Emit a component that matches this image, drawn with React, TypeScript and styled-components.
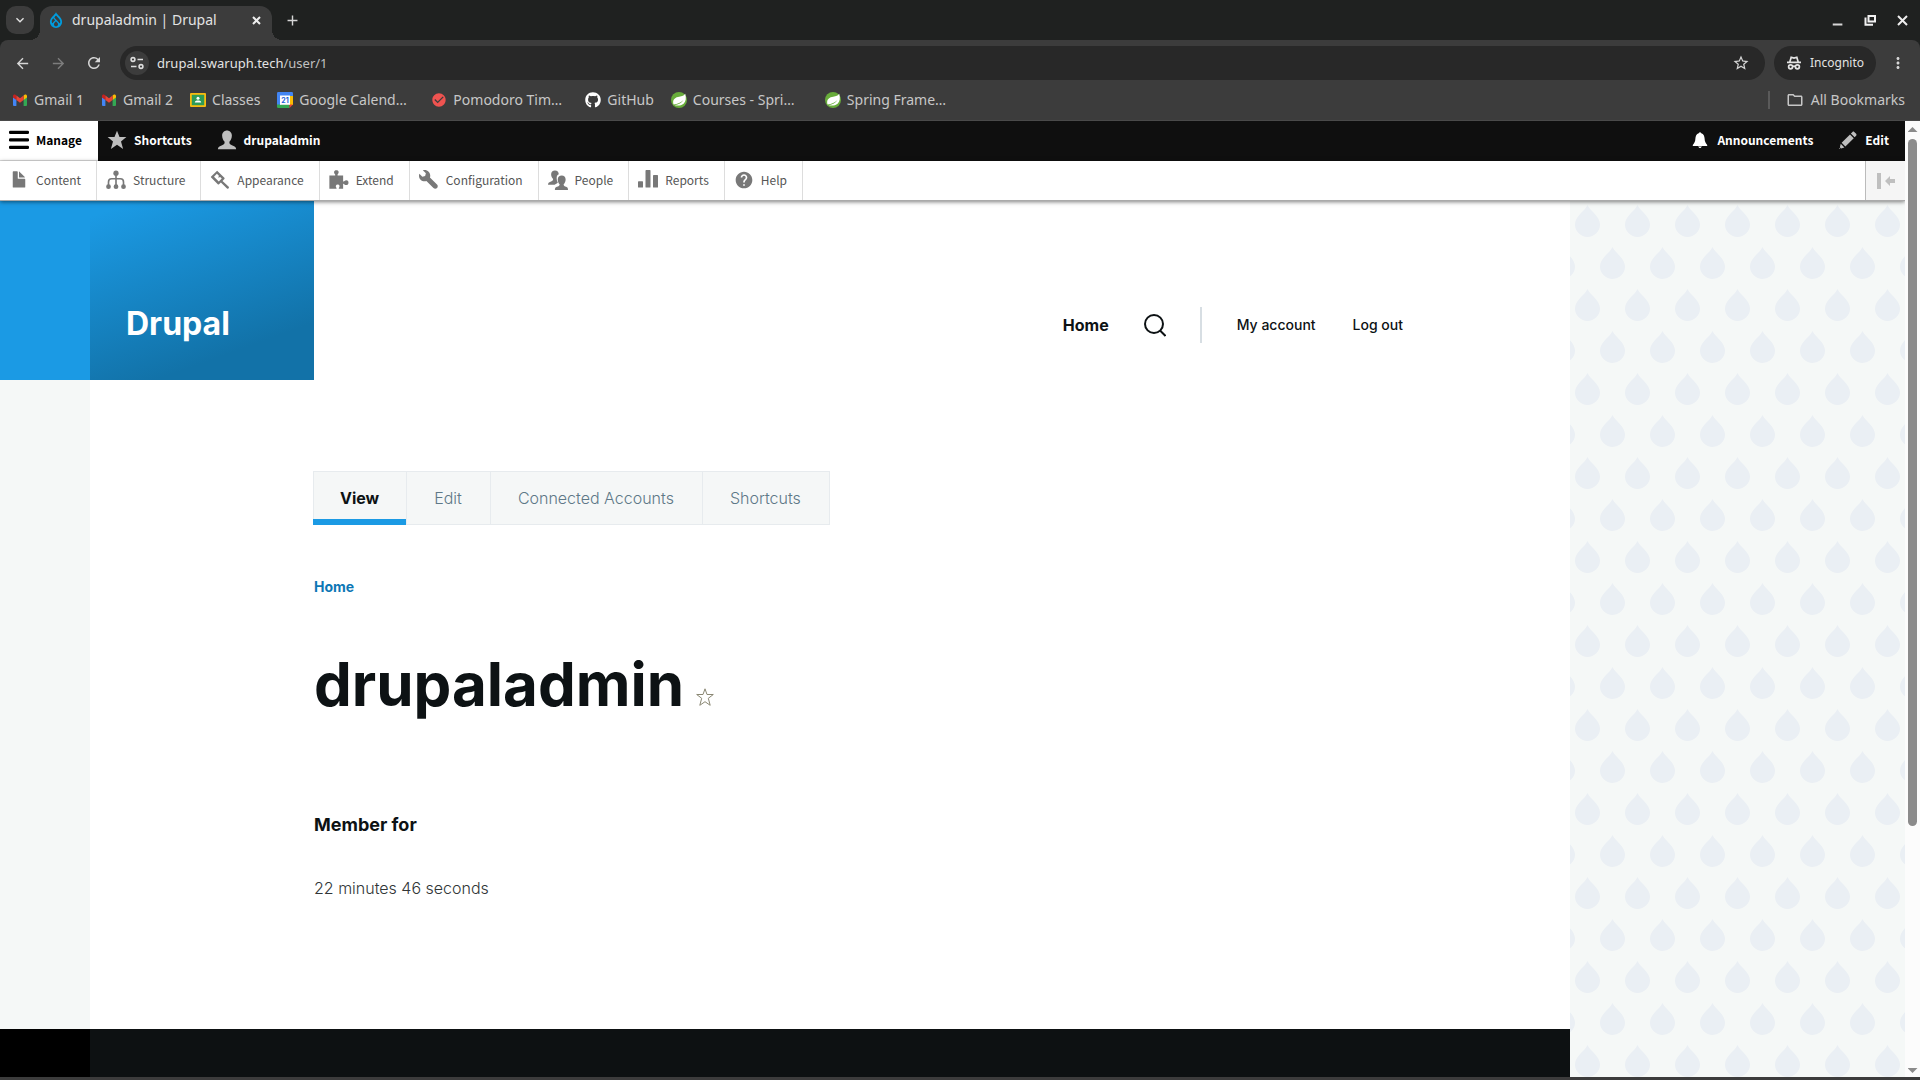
import React from 'react';
import styled, { createGlobalStyle, css } from 'styled-components';
import {
  MdArrowBack,
  MdArrowForward,
  MdRefresh,
  MdStarBorder,
  MdMoreVert,
  MdKeyboardArrowDown,
  MdClose,
  MdAdd,
  MdOutlineFolder,
  MdCheckCircle,
  MdHelp,
} from 'react-icons/md';
import { SiDrupal } from 'react-icons/si';
import { FaGithub } from 'react-icons/fa';

const uiFont = '"Noto Sans", "Open Sans", sans-serif';
const adminFont = '"Noto Sans CJK SC", "Noto Sans", sans-serif';
const siteFont = 'Inter, Lato, sans-serif';

const dropTile = encodeURIComponent(
  '<svg xmlns="http://www.w3.org/2000/svg" width="50" height="84">' +
    '<defs><path id="d" d="M12.500 0C15 6 25 11 25 19.500A12.500 12.500 0 0 1 0 19.500C0 11 10 6 12.500 0Z"/></defs>' +
    '<g fill="#eaeff4"><use href="#d" x="5" y="4"/><use href="#d" x="30" y="46"/><use href="#d" x="-20" y="46"/></g></svg>',
);

const GlobalStyle = createGlobalStyle`
  *, *::before, *::after { box-sizing: border-box; }
  html { height: 100%; }
  body { margin: 0; height: 100%; background: #3c3c3c; }
  #root { height: 100%; }
  h1, h2, p, ul { margin: 0; padding: 0; }
  ul { list-style: none; }
  a { color: inherit; text-decoration: none; }
  button { border: 0; padding: 0; background: none; color: inherit; font: inherit; cursor: pointer; }
  svg { display: block; flex: none; }
`;

/* ---------- browser window ---------- */

const BrowserWindow = styled.div`
  display: flex;
  flex-direction: column;
  height: 100vh;
  min-height: 480px;
  padding-bottom: 3px;
  background: #3c3c3c;
  font-family: ${uiFont};
`;

const TabStrip = styled.header`
  display: flex;
  align-items: center;
  height: 40px;
  flex: none;
  padding: 0 4px 0 6px;
  background: #1f2120;
  color: #e3e3e3;
`;

const TabSearch = styled.button`
  display: grid;
  place-items: center;
  width: 28px;
  height: 28px;
  border-radius: 10px;
  background: #3c3c3c;
`;

const BrowserTab = styled.div`
  position: relative;
  display: flex;
  align-items: center;
  gap: 8px;
  align-self: flex-end;
  width: 232px;
  height: 34px;
  margin-left: 6px;
  padding: 0 8px 6px;
  border-radius: 12px 12px 0 0;
  background: #3c3c3c;
  font-size: 14px;
  line-height: 20px;

  &::before,
  &::after {
    content: '';
    position: absolute;
    bottom: 0;
    width: 10px;
    height: 10px;
  }
  &::before {
    left: -10px;
    background: radial-gradient(circle at 0 0, transparent 10px, #3c3c3c 10px);
  }
  &::after {
    right: -10px;
    background: radial-gradient(circle at 100% 0, transparent 10px, #3c3c3c 10px);
  }
`;

const TabTitle = styled.span`
  flex: 1;
  white-space: nowrap;
`;

const IconButton = styled.button<{ $size?: number; $dim?: boolean }>`
  display: grid;
  place-items: center;
  flex: none;
  width: ${(p) => p.$size ?? 28}px;
  height: ${(p) => p.$size ?? 28}px;
  color: ${(p) => (p.$dim ? '#7d7d7d' : '#d6d6d6')};
`;

const NewTab = styled(IconButton)`
  margin-left: 6px;
`;

const WindowControls = styled.div`
  display: flex;
  gap: 4px;
  margin-left: auto;
  color: #f1f1f1;
`;

const AddressRow = styled.div`
  display: flex;
  align-items: center;
  height: 46px;
  flex: none;
  padding: 0 8px;
  background: #3c3c3c;
  border-radius: 8px 8px 0 0;
`;

const ToolbarBack = styled.div`
  background: #1f2120;
`;

const NavButtons = styled.div`
  display: flex;
  gap: 8px;
  margin-right: 12px;
`;

const AddressBar = styled.form`
  display: flex;
  align-items: center;
  flex: 1;
  height: 34px;
  padding: 0 10px 0 5px;
  border-radius: 17px;
  background: #282828;
`;

const SiteInfo = styled(IconButton)`
  border-radius: 50%;
  background: #3c3c3c;
`;

const AddressField = styled.label`
  flex: 1;
  display: grid;
  align-items: center;
  padding-left: 8px;
  font-size: 13px;
  line-height: 20px;
`;

const AddressText = styled.span`
  grid-area: 1 / 1;
  color: #e3e3e3;
  pointer-events: none;
  span { color: #c0c0c0; }
`;

const AddressInput = styled.input`
  grid-area: 1 / 1;
  width: 100%;
  border: 0;
  padding: 0;
  outline: 0;
  background: transparent;
  color: #e3e3e3;
  font: inherit;
`;

const IncognitoChip = styled.button`
  display: flex;
  align-items: center;
  gap: 8px;
  height: 34px;
  margin: 0 8px 0 9px;
  padding: 0 12px;
  border-radius: 17px;
  background: #282828;
  color: #e3e3e3;
  font-size: 12px;
  line-height: 18px;
`;

const BookmarkBar = styled.nav`
  display: flex;
  align-items: center;
  gap: 17px;
  height: 35px;
  flex: none;
  padding: 0 15px 7px 12px;
  background: #3c3c3c;
  border-bottom: 1px solid #4a4a4a;
  color: #c7c7c7;
  font-size: 14px;
  line-height: 20px;
`;

const Bookmark = styled.a<{ $clipped?: boolean }>`
  display: flex;
  align-items: center;
  gap: 6px;
  white-space: nowrap;
  ${(p) => p.$clipped && css`min-width: 137px;`}
`;

const AllBookmarks = styled(Bookmark)`
  gap: 7px;
  margin-left: auto;
  padding-left: 16px;
  border-left: 2px solid #5a5a5a;
  line-height: 16px;
`;

/* ---------- viewport and scroll bar ---------- */

const Viewport = styled.div`
  display: flex;
  flex: 1;
  min-height: 0;
`;

const Page = styled.div`
  display: flex;
  flex-direction: column;
  flex: 1;
  min-width: 0;
  overflow: hidden;
  background: #f5f8f7;
`;

const ScrollTrack = styled.div`
  display: flex;
  flex-direction: column;
  align-items: center;
  width: 15px;
  flex: none;
  padding: 6px 0 4px;
  background: #fcfcfc;
`;

const ScrollArrow = styled.i<{ $down?: boolean }>`
  width: 10px;
  height: 5px;
  background: #8b8b8b;
  clip-path: ${(p) => (p.$down ? 'polygon(0 0, 100% 0, 50% 100%)' : 'polygon(50% 0, 100% 100%, 0 100%)')};
`;

const ScrollSpace = styled.div`
  display: flex;
  flex-direction: column;
  flex: 1;
  width: 9px;
  padding: 7px 0 0;
`;

const ScrollThumb = styled.div`
  height: 74%;
  border-radius: 5px;
  background: #8b8b8b;
`;

/* ---------- administration toolbar ---------- */

const AdminBar = styled.nav`
  display: flex;
  flex: none;
  height: 40px;
  background: #0f0f0f;
  color: #ffffff;
  font-family: ${adminFont};
  font-size: 12px;
  font-weight: 700;
  line-height: 18px;
`;

const AdminTab = styled.button<{ $active?: boolean }>`
  display: flex;
  align-items: center;
  gap: 7px;
  padding: 0 16px 1px 9px;
  background: ${(p) => (p.$active ? '#ffffff' : 'transparent')};
  color: ${(p) => (p.$active ? '#000000' : '#ffffff')};
  border-bottom: 1px solid ${(p) => (p.$active ? '#dddddd' : 'transparent')};
`;

const AdminEnd = styled.div`
  display: flex;
  margin-left: auto;
`;

const Tray = styled.nav`
  position: relative;
  z-index: 1;
  display: flex;
  flex: none;
  height: 40px;
  background: #ffffff;
  border-bottom: 1px solid #aaaaaa;
  box-shadow: 0 1px 4px rgba(0, 0, 0, 0.5);
  color: #565656;
  font-family: ${adminFont};
  font-size: 12px;
  line-height: 18px;
`;

const TrayList = styled.ul`
  display: flex;
`;

const TrayItem = styled.li`
  display: flex;
  border-right: 1px solid #dddddd;
`;

const TrayLink = styled.a`
  display: flex;
  align-items: center;
  gap: 7px;
  padding: 0 15px 1px 9px;
  svg { color: #787878; }
`;

const TrayToggle = styled.button`
  display: grid;
  place-items: center;
  width: 40px;
  margin-left: auto;
  border-left: 1px solid #bbbbbb;
  background: #f5f5f5;
  color: #bfbfbf;
`;

/* ---------- site ---------- */

const Canvas = styled.div`
  flex: 1;
  min-height: 0;
  display: flex;
  background: #f5f8f7 url("data:image/svg+xml,${dropTile}") 1570px 0;
`;

const Wrapper = styled.div`
  display: grid;
  grid-template-columns: 90px minmax(0, 1fr);
  grid-template-rows: auto 1fr 48px;
  width: 100%;
  max-width: 1570px;
  background: #ffffff;
  color: #0d1214;
  font-family: ${siteFont};
`;

const HeaderEdge = styled.div`
  background: #1b9ae4;
`;

const Gutter = styled.div`
  background: #f5f8f7;
`;

const SiteHeader = styled.header`
  display: flex;
  align-items: stretch;
  justify-content: space-between;
  height: 179px;
`;

const Branding = styled.a`
  display: flex;
  align-items: flex-end;
  width: 224px;
  padding: 0 36px 29px;
  background: linear-gradient(160deg, #1b9ae4 6%, #1272a8 78%);
  color: #ffffff;
  font-size: 32px;
  font-weight: 700;
  line-height: 54px;
`;

const SiteNav = styled.nav`
  display: flex;
  align-items: center;
  align-self: flex-end;
  height: 54px;
  margin: 0 167px 28px 0;
  font-size: 14px;
  font-weight: 500;
  line-height: 20px;
`;

const HomeLink = styled.a`
  font-size: 16px;
  font-weight: 700;
`;

const SearchButton = styled.button`
  margin: 0 34px 0 35px;
`;

const AccountLinks = styled.div`
  display: flex;
  align-items: center;
  gap: 37px;
  height: 36px;
  padding-left: 35px;
  border-left: 2px solid #d7dee3;
`;

const Main = styled.main`
  display: flex;
  flex-direction: column;
  align-items: flex-start;
  padding: 91px 0 0 224px;
`;

const Tabs = styled.ul`
  display: flex;
  height: 54px;
  margin-left: -1px;
  border: 1px solid #e7ebee;
  background: #f5f7f7;
`;

const Tab = styled.li<{ $active?: boolean }>`
  display: flex;
  & + & { border-left: 1px solid #e7ebee; }
  ${(p) => p.$active && css`
    margin: 0 0 -1px -1px;
    border-bottom: 6px solid #1b9ae4;
  `}
`;

const TabLink = styled.a<{ $active?: boolean }>`
  display: flex;
  align-items: center;
  padding: ${(p) => (p.$active ? '4px 27px 0' : '0 28px 1px 27px')};
  color: ${(p) => (p.$active ? '#0d1214' : '#5e7887')};
  font-size: 16px;
  font-weight: ${(p) => (p.$active ? 700 : 300)};
  line-height: 24px;
`;

const Breadcrumb = styled.nav`
  margin-top: 52px;
  color: #0d77b5;
  font-size: 14px;
  font-weight: 700;
  line-height: 20px;
`;

const TitleRow = styled.div`
  display: flex;
  align-items: flex-end;
  gap: 12px;
  margin-top: 47px;
`;

const Title = styled.h1`
  font-size: 60px;
  font-weight: 700;
  line-height: 80px;
`;

const StarButton = styled.button`
  margin-bottom: 18px;
`;

const FieldLabel = styled.h2`
  margin-top: 88px;
  font-size: 18px;
  font-weight: 700;
  line-height: 26px;
`;

const FieldValue = styled.p`
  margin-top: 36px;
  color: #313637;
  font-size: 16px;
  font-weight: 300;
  line-height: 28px;
`;

const FooterEdge = styled.div`
  background: #000000;
`;

const Footer = styled.footer`
  background: #0d1112;
`;

/* ---------- icons ---------- */

const Icon16 = ({ size = 20, children }: { size?: number; children: React.ReactNode }) => (
  <svg width={size} height={size} viewBox="0 0 16 16" fill="currentColor" aria-hidden="true">
    {children}
  </svg>
);

const MenuIcon = () => (
  <Icon16>
    <rect y="0.500" width="16" height="2.600" rx="1" />
    <rect y="6.500" width="16" height="2.600" rx="1" />
    <rect y="12.500" width="16" height="2.600" rx="1" />
  </Icon16>
);
const StarIcon = () => (
  <Icon16>
    <path fill="#bebebe" d="M8 .5l2 5h5.500l-4.300 3.600 1.700 6L8 11.700 3.100 15.100l1.700-6L.5 5.500H6z" />
  </Icon16>
);
const PersonShape = 'M8 .4c2.200 0 3.900 1.700 3.900 4 0 2.300-1 4-2 5 0 1.600.3 2.100 2 2.700 2 .7 3.400 1.300 3.400 3.300H.7c0-2 1.400-2.600 3.400-3.300 1.700-.6 2-1.100 2-2.700-1-1-2-2.700-2-5 0-2.300 1.700-4 3.900-4z';
const PersonIcon = () => (
  <Icon16>
    <path fill="#bebebe" d={PersonShape} />
  </Icon16>
);
const PencilIcon = () => (
  <Icon16>
    <path
      fill="#bebebe"
      d="M14.500 3L13 1.500c-.4-.4-1-.4-1.400 0l-1.300 1.300 3 3 1.200-1.300c.4-.4.4-1 0-1.500zM5.900 13.200l-3-3 6.700-6.700 3 3zM2.200 11l2.900 2.900-2.700.8-.9-.9zM1.100 14.300l.7.700-1 .2z"
    />
  </Icon16>
);
const BellIcon = () => (
  <svg width="20" height="20" viewBox="0 0 20 20" fill="#ffffff" aria-hidden="true">
    <path d="M10 2l1.300 1.200c2.300.8 3.200 3 3.300 5.400.1 3 .9 4.500 2.600 6.400v1H2.800v-1c1.700-1.900 2.500-3.400 2.600-6.400.1-2.400 1-4.600 3.300-5.400zM8 16.500h4L10.500 18h-1z" />
  </svg>
);
const FileIcon = () => (
  <Icon16>
    <path d="M12.502 7h-5c-.276 0-.502-.225-.502-.5v-5c0-.275-.225-.5-.5-.5h-3c-.275 0-.5.225-.5.5v12.029c0 .275.225.5.5.5h9c.275 0 .5-.225.5-.5V7.500c0-.275-.225-.5-.498-.5zM8.502 6h4c.275 0 .34-.159.146-.354L8.355 1.354C8.160 1.159 8.002 1.225 8.002 1.500v4c0 .275.225.5.5.5z" />
  </Icon16>
);
const StructureIcon = () => (
  <Icon16>
    <circle cx="8" cy="2.500" r="2.100" />
    <path fill="none" stroke="currentColor" strokeWidth="1.300" d="M8 4v9M2 13V9.500Q2 7 4.500 7h7Q14 7 14 9.500V13" />
    <circle cx="2" cy="13.300" r="1.900" />
    <circle cx="8" cy="13.300" r="1.900" />
    <circle cx="14" cy="13.300" r="1.900" />
  </Icon16>
);
const BrushIcon = () => (
  <Icon16>
    <path fillRule="evenodd" d="M5.700.5L11.500 6.200c.3.300.3.600 0 1L10 8.700l5 4.700c.6.900-.4 2-1.400 1.300L8.700 9.900l-1.500 1.500c-.3.300-.7.300-1 0L.9 6c-.3-.3-.3-.6 0-.9zM5.500 3L3.200 5.300 7 9.100l2.400-2.300-1.300-1.300-1.500.7.500-1.600z" />
  </Icon16>
);
const PuzzleIcon = () => (
  <Icon16>
    <path d="M.3 4.300h4.300c.5 0 .5-.5.3-.8C3.700 2.200 3.600.1 5.900.1s2.200 2.100 1 3.400c-.2.300-.1.800.4.800h4v4.400c0 .5.400.7.800.3 1.300-1.200 3.500-1 3.500 1.100s-2.200 2.400-3.500 1.200c-.4-.4-.8-.2-.8.300v3.300H8.200c-.4 0-.5-.4-.2-.8.800-1 .6-2.600-1-2.600s-2 1.600-1.100 2.600c.3.400.2.800-.2.800H.3z" />
  </Icon16>
);
const WrenchIcon = () => (
  <Icon16>
    <path d="M14.416 11.586l-.01-.008v-.001L8.750 5.921c.15-.449.252-.921.252-1.421 0-2.485-2.016-4.500-4.502-4.500-.505 0-.981.102-1.434.255l2.431 2.431-.588 2.196-2.196.588L.268 3.025C.106 3.489 0 3.981 0 4.500 0 6.986 2.014 9 4.500 9c.5 0 .972-.102 1.421-.251l5.667 5.665c.781.781 2.047.781 2.828 0s.781-2.047 0-2.828z" />
  </Icon16>
);
const PeopleIcon = () => (
  <Icon16>
    <path d="M5.600.3c1.900 0 3 1.300 3 3C7 4 6.800 5.600 7 7.300c.1 1.400.6 2 .9 2.600-.8.900-1.800 1.100-2.600 1.900H0c0-1.500.7-2 2-2.500s2.100-.8 2.100-2.100c-.9-.9-1.600-2.100-1.600-3.800 0-1.800 1.200-3.100 3.100-3.100z" />
    <path d="M11 4.400c1.800 0 3.100 1.300 3.100 3.100 0 1.700-.8 3-1.600 3.800 0 1.300.8 1.600 2 2.100 1.100.4 1.500 1.100 1.500 2.500H5.500c0-1.400.5-2.100 1.600-2.500 1.200-.5 2.200-.8 2.200-2.100-.9-.8-1.500-2.100-1.500-3.800 0-1.800 1.400-3.100 3.200-3.100z" />
  </Icon16>
);
const ReportsIcon = () => (
  <Icon16>
    <rect y="9" width="4" height="5" rx="0.500" />
    <rect x="6" width="4" height="14" rx="0.500" />
    <rect x="12" y="4" width="4" height="10" rx="0.500" />
  </Icon16>
);
const CollapseIcon = () => (
  <svg width="20" height="20" viewBox="0 0 20 20" fill="currentColor" aria-hidden="true">
    <path d="M1 2h4v16H1zM9 10l5-5v3h5v4h-5v3z" />
  </svg>
);
const SearchIcon = () => (
  <svg width="22" height="24" viewBox="0 0 22 24" fill="none" stroke="#0d1214" strokeWidth="2" aria-hidden="true">
    <circle cx="10" cy="11" r="9" />
    <path d="M16 17.500l5.500 5.500" />
  </svg>
);
const TitleStarIcon = () => (
  <svg width="18" height="18" viewBox="0 0 18 18" fill="#ffffff" stroke="#8a8773" aria-hidden="true">
    <path d="M9 .8l2 5.700h6.300l-5 3.800 1.900 7L9 13.700l-5.200 3.600 1.900-7-5-3.800H7z" />
  </svg>
);
const SiteInfoIcon = () => (
  <svg width="14" height="14" viewBox="0 0 14 14" fill="none" stroke="#dddddd" strokeWidth="1.600" aria-hidden="true">
    <circle cx="3" cy="3.500" r="1.900" />
    <path d="M7.500 3.500H13M1 10.500h5.500" />
    <circle cx="11" cy="10.500" r="1.900" />
  </svg>
);
const IncognitoIcon = () => (
  <svg width="16" height="16" viewBox="0 0 16 16" fill="none" stroke="#e3e3e3" strokeWidth="1.700" aria-hidden="true">
    <path d="M1 7.300h14M3.800 7L5.200 2.200 8 3l2.800-.8L12.200 7" />
    <circle cx="4.600" cy="11.800" r="2" />
    <circle cx="11.400" cy="11.800" r="2" />
    <path d="M6.600 11.500q1.400-.8 2.800 0" />
  </svg>
);
const MinimizeIcon = () => (
  <Icon16 size={14}>
    <path d="M2 12h11v2.300H2z" />
  </Icon16>
);
const RestoreIcon = () => (
  <svg width="12" height="12" viewBox="0 0 12 12" fill="none" stroke="#f1f1f1" strokeWidth="2" aria-hidden="true">
    <path d="M4.500 2H11v5.500H4.500zM1.500 3.500v7.200H9" />
  </svg>
);
const CrossIcon = ({ size, weight }: { size: number; weight: number }) => (
  <svg width={size} height={size} viewBox={`0 0 ${size} ${size}`} fill="none" stroke="#eeeeee" strokeWidth={weight} aria-hidden="true">
    <path d={`M1 1L${size - 1} ${size - 1}M${size - 1} 1L1 ${size - 1}`} />
  </svg>
);
const SpringIcon = () => (
  <svg width="16" height="16" viewBox="0 0 16 16" aria-hidden="true">
    <circle cx="8" cy="8" r="8" fill="#68ac3b" />
    <path fill="#ffffff" d="M14.200 1.800c1.200 4 .8 7.700-1.600 9.900-2.300 2-5.800 2-8.900 1.600 3.800-.6 7-2.100 8.700-5.200-2.400 2.800-5.800 4-9.800 4.500C1.200 8.600 3.300 5.700 7 5c3.100-.6 5.700-.7 7.200-3.200z" />
  </svg>
);
const GmailIcon = () => (
  <svg width="16" height="16" viewBox="0 0 16 16" aria-hidden="true">
    <path fill="#4285f4" d="M1 5l3.400 2.500V14H2a1 1 0 0 1-1-1z" />
    <path fill="#34a853" d="M15 5l-3.400 2.500V14H14a1 1 0 0 0 1-1z" />
    <path fill="#fbbc04" d="M11.600 3.500l1-.8C13.600 2 15 2.700 15 4v1.500L11.600 8z" />
    <path fill="#c5221f" d="M1 5.500V4c0-1.300 1.400-2 2.400-1.300l1 .8V8z" />
    <path fill="#ea4335" d="M4.400 3.500L8 6.200l3.600-2.700V8L8 10.700 4.400 8z" />
  </svg>
);
const ClassroomIcon = () => (
  <svg width="16" height="16" viewBox="0 0 16 16" aria-hidden="true">
    <rect y="1" width="16" height="14" rx="1" fill="#f6bc10" />
    <rect x="1.800" y="2.800" width="12.400" height="10.400" fill="#2e9b57" />
    <circle cx="8" cy="6.300" r="1.500" fill="#fff" />
    <path fill="#fff" d="M4.800 10.500c0-1.700 1.400-2.100 3.200-2.100s3.200.4 3.200 2.100z" />
  </svg>
);
const CalText = styled.text`
  font: 700 7px ${siteFont};
  fill: #1a62d8;
  text-anchor: middle;
`;
const CalendarIcon = () => (
  <svg width="16" height="16" viewBox="0 0 16 16" aria-hidden="true">
    <path fill="#4285f4" d="M0 1.200Q0 0 1.200 0h13.600Q16 0 16 1.200V4H0z" />
    <path fill="#4285f4" d="M0 3h4v10H0z" />
    <path fill="#fbbc04" d="M12.500 4H16v9h-3.500z" />
    <path fill="#34a853" d="M0 12.500h12.500V16H1.200Q0 16 0 14.800z" />
    <path fill="#ea4335" d="M12.500 12.500H16L12.500 16z" />
    <path fill="#fff" d="M3 3.500h10v9.300H3z" />
    <CalText x="8" y="11">21</CalText>
  </svg>
);

const bookmarks: { label: string; icon: React.ReactNode; clipped?: boolean }[] = [
  { label: 'Gmail 1', icon: <GmailIcon /> },
  { label: 'Gmail 2', icon: <GmailIcon /> },
  { label: 'Classes', icon: <ClassroomIcon /> },
  { label: 'Google Calend…', icon: <CalendarIcon />, clipped: true },
  { label: 'Pomodoro Tim…', icon: <MdCheckCircle size={16} color="#ef5350" />, clipped: true },
  { label: 'GitHub', icon: <FaGithub size={16} color="#ffffff" /> },
  { label: 'Courses - Spri…', icon: <SpringIcon />, clipped: true },
  { label: 'Spring Frame…', icon: <SpringIcon />, clipped: true },
];

const trayItems: { label: string; icon: React.ReactNode }[] = [
  { label: 'Content', icon: <FileIcon /> },
  { label: 'Structure', icon: <StructureIcon /> },
  { label: 'Appearance', icon: <BrushIcon /> },
  { label: 'Extend', icon: <PuzzleIcon /> },
  { label: 'Configuration', icon: <WrenchIcon /> },
  { label: 'People', icon: <PeopleIcon /> },
  { label: 'Reports', icon: <ReportsIcon /> },
  { label: 'Help', icon: <MdHelp size={20} /> },
];

const profileTabs = ['View', 'Edit', 'Connected Accounts', 'Shortcuts'];

export default function App() {
  return (
    <BrowserWindow>
      <GlobalStyle />
      <TabStrip>
        <TabSearch aria-label="Search tabs"><MdKeyboardArrowDown size={16} /></TabSearch>
        <BrowserTab>
          <SiDrupal size={16} color="#009cde" />
          <TabTitle>drupaladmin | Drupal</TabTitle>
          <IconButton $size={16} aria-label="Close tab"><CrossIcon size={9} weight={2} /></IconButton>
        </BrowserTab>
        <NewTab aria-label="New tab"><MdAdd size={17} /></NewTab>
        <WindowControls>
          <IconButton aria-label="Minimize"><MinimizeIcon /></IconButton>
          <IconButton aria-label="Restore"><RestoreIcon /></IconButton>
          <IconButton aria-label="Close"><CrossIcon size={11} weight={2} /></IconButton>
        </WindowControls>
      </TabStrip>
      <ToolbarBack>
        <AddressRow>
          <NavButtons>
            <IconButton aria-label="Back"><MdArrowBack size={17} /></IconButton>
            <IconButton $dim aria-label="Forward"><MdArrowForward size={17} /></IconButton>
            <IconButton aria-label="Reload"><MdRefresh size={18} /></IconButton>
          </NavButtons>
          <AddressBar onSubmit={(e) => e.preventDefault()}>
            <SiteInfo $size={24} type="button" aria-label="Site information"><SiteInfoIcon /></SiteInfo>
            <AddressField>
              <AddressText>drupal.swaruph.tech<span>/user/1</span></AddressText>
              <AddressInput aria-label="Address" />
            </AddressField>
            <IconButton type="button" aria-label="Bookmark this tab"><MdStarBorder size={18} /></IconButton>
          </AddressBar>
          <IncognitoChip><IncognitoIcon />Incognito</IncognitoChip>
          <IconButton aria-label="Menu"><MdMoreVert size={18} /></IconButton>
        </AddressRow>
      </ToolbarBack>
      <BookmarkBar aria-label="Bookmarks">
        {bookmarks.map((b) => (
          <Bookmark key={b.label} href="#" $clipped={b.clipped}>{b.icon}{b.label}</Bookmark>
        ))}
        <AllBookmarks href="#"><MdOutlineFolder size={18} />All Bookmarks</AllBookmarks>
      </BookmarkBar>

      <Viewport>
        <Page>
          <AdminBar aria-label="Administration toolbar">
            <AdminTab $active><MenuIcon />Manage</AdminTab>
            <AdminTab><StarIcon />Shortcuts</AdminTab>
            <AdminTab><PersonIcon />drupaladmin</AdminTab>
            <AdminEnd>
              <AdminTab><BellIcon />Announcements</AdminTab>
              <AdminTab><PencilIcon />Edit</AdminTab>
            </AdminEnd>
          </AdminBar>
          <Tray aria-label="Administration menu">
            <TrayList>
              {trayItems.map((t) => (
                <TrayItem key={t.label}><TrayLink href="#">{t.icon}{t.label}</TrayLink></TrayItem>
              ))}
            </TrayList>
            <TrayToggle aria-label="Vertical orientation"><CollapseIcon /></TrayToggle>
          </Tray>
          <Canvas>
            <Wrapper>
              <HeaderEdge />
              <SiteHeader>
                <Branding href="#">Drupal</Branding>
                <SiteNav aria-label="Main navigation">
                  <HomeLink href="#">Home</HomeLink>
                  <SearchButton aria-label="Search"><SearchIcon /></SearchButton>
                  <AccountLinks>
                    <a href="#">My account</a>
                    <a href="#">Log out</a>
                  </AccountLinks>
                </SiteNav>
              </SiteHeader>
              <Gutter />
              <Main>
                <Tabs>
                  {profileTabs.map((t, i) => (
                    <Tab key={t} $active={i === 0}><TabLink href="#" $active={i === 0}>{t}</TabLink></Tab>
                  ))}
                </Tabs>
                <Breadcrumb aria-label="Breadcrumb"><a href="#">Home</a></Breadcrumb>
                <TitleRow>
                  <Title>drupaladmin</Title>
                  <StarButton aria-label="Add to shortcuts"><TitleStarIcon /></StarButton>
                </TitleRow>
                <FieldLabel>Member for</FieldLabel>
                <FieldValue>22 minutes 46 seconds</FieldValue>
              </Main>
              <FooterEdge />
              <Footer />
            </Wrapper>
          </Canvas>
        </Page>
        <ScrollTrack aria-hidden="true">
          <ScrollArrow />
          <ScrollSpace><ScrollThumb /></ScrollSpace>
          <ScrollArrow $down />
        </ScrollTrack>
      </Viewport>
    </BrowserWindow>
  );
}
